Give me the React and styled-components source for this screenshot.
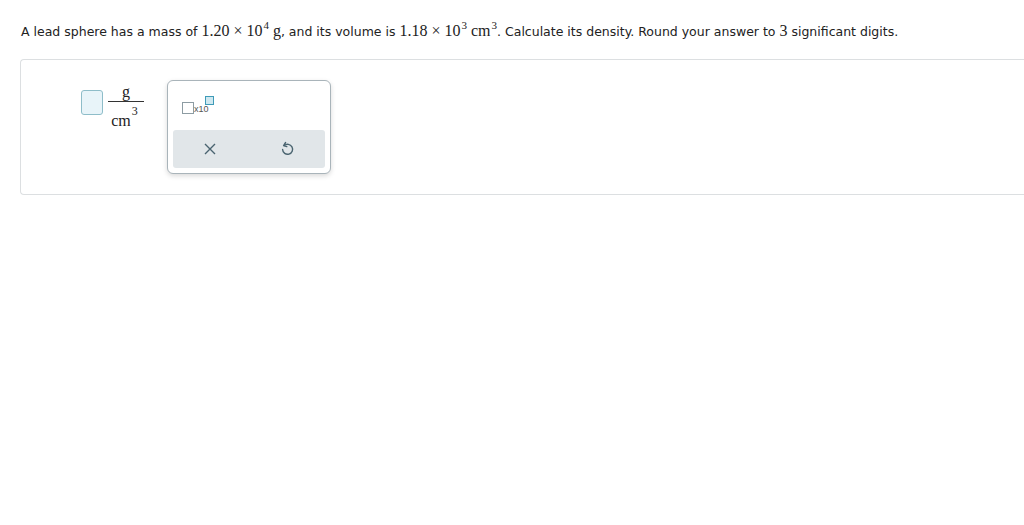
import React from 'react'
import styled, { createGlobalStyle } from 'styled-components'

const Global = createGlobalStyle`
  html, body { margin: 0; padding: 0; background: #fff; }
  body { font-family: "DejaVu Sans", Verdana, sans-serif; color: #222; }
`

const Page = styled.div`
  padding: 16px 0 0 21px;
  overflow: hidden;
  width: 1024px;
  box-sizing: border-box;
`

const Question = styled.p`
  margin: 0;
  font-size: 12.5px;
  line-height: 30px;
  white-space: nowrap;
`

const M = styled.span`
  font-family: "Liberation Serif", "Times New Roman", serif;
  font-size: 16px;
`

const Sup = styled.sup`
  font-size: 11px;
  vertical-align: 7px;
  line-height: 0;
  margin-left: 1px;
`

const Panel = styled.div`
  margin: 12px 0 0 -1px;
  width: 1020px;
  height: 136px;
  border: 1px solid #dcdfe1;
  border-right: none;
  border-radius: 4px 0 0 4px;
  box-sizing: border-box;
  display: flex;
  align-items: flex-start;
  padding: 20px 0 0 60px;
`

const Answer = styled.div`
  display: flex;
  align-items: flex-start;
  gap: 5px;
  margin-top: 10px;
`

const InputBox = styled.div`
  width: 20px;
  height: 23px;
  background: #e8f4f9;
  border: 1px solid #8ebdc9;
  border-radius: 3px;
`

const Fraction = styled.div`
  display: flex;
  flex-direction: column;
  align-items: center;
  font-family: "Liberation Serif", "Times New Roman", serif;
  font-size: 16px;
  line-height: 17px;
  width: 36px;
  margin-top: -7px;
`

const Num = styled.div`
  width: 100%;
  text-align: center;
  border-bottom: 1px solid #333;
  padding-bottom: 1px;
`

const Den = styled.div`
  position: relative;
  padding-top: 10px;
  padding-right: 10px;
`

const DenSup = styled.span`
  position: absolute;
  right: 3px;
  top: 3px;
  font-size: 12px;
  line-height: 12px;
`

const Popup = styled.div`
  margin-left: 23px;
  width: 164px;
  height: 94px;
  box-sizing: border-box;
  border: 1px solid #a9b4ba;
  border-radius: 6px;
  background: #fff;
  box-shadow: 0 2px 5px rgba(0, 0, 0, 0.15);
  padding: 0 5px 5px 5px;
  display: flex;
  flex-direction: column;
`

const Sci = styled.div`
  height: 49px;
  display: flex;
  align-items: flex-end;
  padding: 0 0 16px 9px;
  box-sizing: border-box;
`

const Mantissa = styled.div`
  width: 10px;
  height: 10px;
  border: 1.5px solid #8d9ca3;
`

const Ten = styled.span`
  font-family: "Liberation Sans", Arial, sans-serif;
  font-size: 9px;
  line-height: 9px;
  color: #555;
`

const Exp = styled.div`
  width: 7px;
  height: 7px;
  background: #cfe8f0;
  border: 1.5px solid #3f9bb8;
  margin-left: -4px;
  margin-bottom: 9px;
`

const ToolBar = styled.div`
  flex: 1;
  background: #e1e6e9;
  border-radius: 3px;
  display: flex;
  align-items: center;
  justify-content: space-between;
  padding: 0 28px 0 27px;
`

const Tool = styled.button`
  background: none;
  border: none;
  padding: 0;
  width: 20px;
  height: 20px;
  display: flex;
  align-items: center;
  justify-content: center;
  cursor: pointer;
`

const App = () => (
  <Page>
    <Global />
    <Question>
      A lead sphere has a mass of <M>1.20 × 10<Sup>4</Sup></M> <M>g</M>, and its volume is{' '}
      <M>1.18 × 10<Sup>3</Sup></M> <M>cm<Sup>3</Sup></M>. Calculate its density. Round your answer to{' '}
      <M>3</M> significant digits.
    </Question>
    <Panel>
      <Answer>
        <InputBox />
        <Fraction>
          <Num>g</Num>
          <Den>
            cm
            <DenSup>3</DenSup>
          </Den>
        </Fraction>
      </Answer>
      <Popup>
        <Sci>
          <Mantissa />
          <Ten>x10</Ten>
          <Exp />
        </Sci>
        <ToolBar>
          <Tool aria-label="clear">
            <svg width="12" height="12" viewBox="0 0 12 12">
              <path d="M1 1 L11 11 M11 1 L1 11" stroke="#4a6470" strokeWidth="1.4" fill="none" />
            </svg>
          </Tool>
          <Tool aria-label="undo">
            <svg width="14" height="16" viewBox="0 0 14 16">
              <path
                d="M4.2 4.6 A5 5 0 1 1 2.6 8.5"
                stroke="#4a6470"
                strokeWidth="1.4"
                fill="none"
                strokeLinecap="round"
              />
              <path d="M5.6 1.5 L3.6 4.6 L6.8 5.6" stroke="#4a6470" strokeWidth="1.4" fill="none" strokeLinejoin="round" strokeLinecap="round" />
            </svg>
          </Tool>
        </ToolBar>
      </Popup>
    </Panel>
  </Page>
)

export default App
